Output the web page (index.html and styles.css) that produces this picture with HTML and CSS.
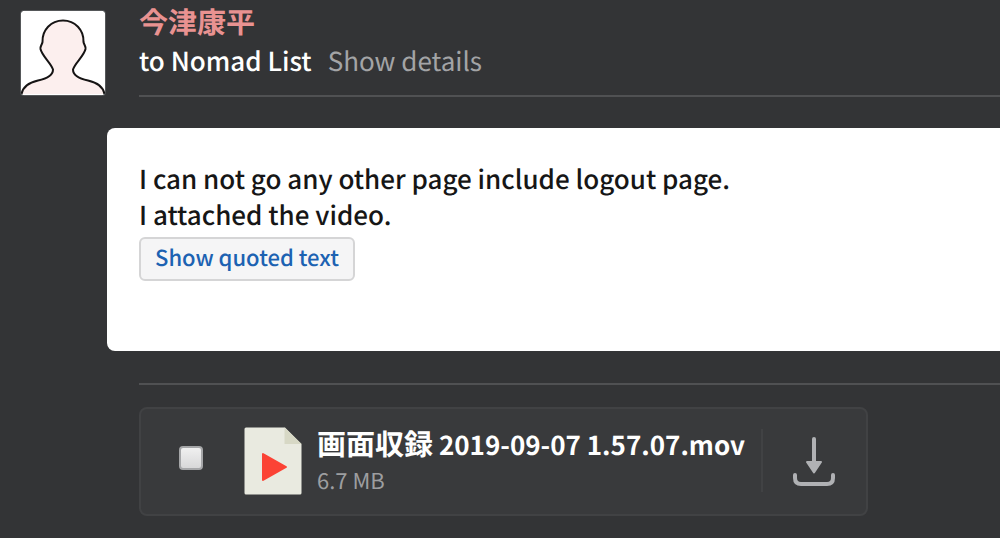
FILE: index.html
```html
<!DOCTYPE html>
<html lang="en">
<head>
<meta charset="utf-8">
<meta name="viewport" content="width=device-width, initial-scale=1">
<title>Message</title>
<link rel="stylesheet" href="styles.css">
</head>
<body>
<main class="message">
  <svg class="avatar" viewBox="0 0 86 86" role="img" aria-label="Profile picture">
    <rect x="1" y="1" width="84" height="84" rx="2" fill="#fff"/>
    <path d="M1.500 84C3 76 9 72.500 18 70.500C27 68.500 33 65 33 59.500C31 53 22 46 20.500 39C20 36 22 35 22.500 32C22 20 31 10.500 43 10.500S64 20 63.500 32C64 35 66 36 65.500 39C64 46 55 53 53 59.500C53 65 59 68.500 68 70.500C77 72.500 83 76 84.500 84" fill="#fcefee" stroke="#161414" stroke-width="2"/>
    <rect x=".5" y=".5" width="85" height="85" rx="3" fill="none" stroke="#555759"/>
  </svg>
  <header class="header">
    <h1 class="sender" lang="ja">今津康平</h1>
    <div class="recipient"><span>to Nomad List</span><button class="details" type="button">Show details</button></div>
  </header>
  <section class="body">
    <p class="text">I can not go any other page include logout page.<br>I attached the video.</p>
    <button class="quoted" type="button">Show quoted text</button>
  </section>
  <footer class="attachments">
    <div class="attachment">
      <input class="select" type="checkbox" aria-label="Select attachment">
      <svg class="file-icon" viewBox="0 0 58 68" aria-hidden="true">
        <path d="M2 .5H41L57.500 17V66Q57.500 67.500 56 67.500H2Q.5 67.500 .5 66V2Q.5 .5 2 .5Z" fill="#e9eae0"/>
        <path d="M40.500 .5L57.500 17H40.500Z" fill="#d7d8c5"/>
        <path d="M19 27V53L42 40Z" fill="#fb4335" stroke="#fb4335" stroke-width="2" stroke-linejoin="round"/>
      </svg>
      <div class="file">
        <strong class="filename"><span class="kanji" lang="ja">画面収録</span> 2019-09-07 1.57.07.mov</strong>
        <span class="size">6.7 MB</span>
      </div>
      <button class="download" type="button" aria-label="Download">
        <svg class="download-icon" viewBox="0 0 42 50" aria-hidden="true">
          <path d="M21 3V27" fill="none" stroke="#b0b1b4" stroke-width="4" stroke-linecap="round"/>
          <path d="M14 26H28L21 36.500Z" fill="#b0b1b4" stroke="#b0b1b4" stroke-width="2" stroke-linejoin="round"/>
          <path d="M2 39V42Q2 48 8 48H34Q40 48 40 42V39" fill="none" stroke="#b0b1b4" stroke-width="4" stroke-linecap="round"/>
        </svg>
      </button>
    </div>
  </footer>
</main>
</body>
</html>
```

FILE: styles.css
```css
* { box-sizing: border-box; }

body {
  margin: 0;
  background: #333436;
  color: #fff;
  font-family: "Noto Sans CJK JP", "Noto Sans", sans-serif;
  font-size: 26px;
  font-weight: 500;
  line-height: 36px;
  text-rendering: geometricPrecision;
}

button {
  margin: 0;
  padding: 0;
  border: 0;
  background: none;
  font: inherit;
  text-rendering: inherit;
  cursor: pointer;
}

.message {
  display: grid;
  grid-template-columns: 87px 32px minmax(0, 1fr);
  padding-left: 20px;
}

.avatar {
  display: block;
  width: 86px;
  height: 86px;
  margin-top: 10px;
}

.header {
  grid-column: 3;
  height: 97px;
  border-bottom: 2px solid #505153;
}

.sender {
  margin: 0;
  color: #e99291;
  font-size: 29px;
  font-weight: 700;
  line-height: 43px;
}

.recipient {
  display: flex;
  gap: 16px;
}

.details {
  color: #a3a4a6;
  font-weight: 400;
}

.body {
  grid-column: 2 / -1;
  min-height: 223px;
  margin-top: 31px;
  padding: 33px 32px;
  border-radius: 8px 0 0 8px;
  background: #fff;
  color: #161616;
}

.text { margin: 0; }

.quoted {
  display: block;
  height: 44px;
  margin-top: 4px;
  padding: 0 14px 4px;
  border: 2px solid #d5d5d6;
  border-radius: 6px;
  background: #f5f5f6;
  color: #1c62b2;
  font-size: 22px;
}

.attachments {
  grid-column: 3;
  margin-top: 32px;
  padding: 22px 0;
  border-top: 2px solid #505153;
}

.attachment {
  display: flex;
  align-items: center;
  width: fit-content;
  height: 109px;
  padding: 0 31px 2px 38px;
  border: 2px solid #414244;
  border-radius: 8px;
  background: #393a3c;
}

.select {
  appearance: none;
  width: 24px;
  height: 24px;
  margin: 0 41px 6px 0;
  border: 2px solid #a5a6a8;
  border-radius: 4px;
  background: linear-gradient(#f0f0f0, #d8d8d9);
}

.file-icon {
  width: 58px;
  height: 68px;
}

.file {
  display: flex;
  flex-direction: column;
  margin-left: 15px;
}

.filename {
  font-size: 26px;
  font-weight: 700;
}

.kanji { font-size: 29px; }

.size {
  color: #9d9ea0;
  font-size: 22px;
  font-weight: 400;
  line-height: 34px;
}

.download {
  height: 63px;
  margin-left: 16px;
  padding-left: 30px;
  border-left: 2px solid #414244;
}

.download-icon {
  display: block;
  width: 42px;
  height: 50px;
}
```
